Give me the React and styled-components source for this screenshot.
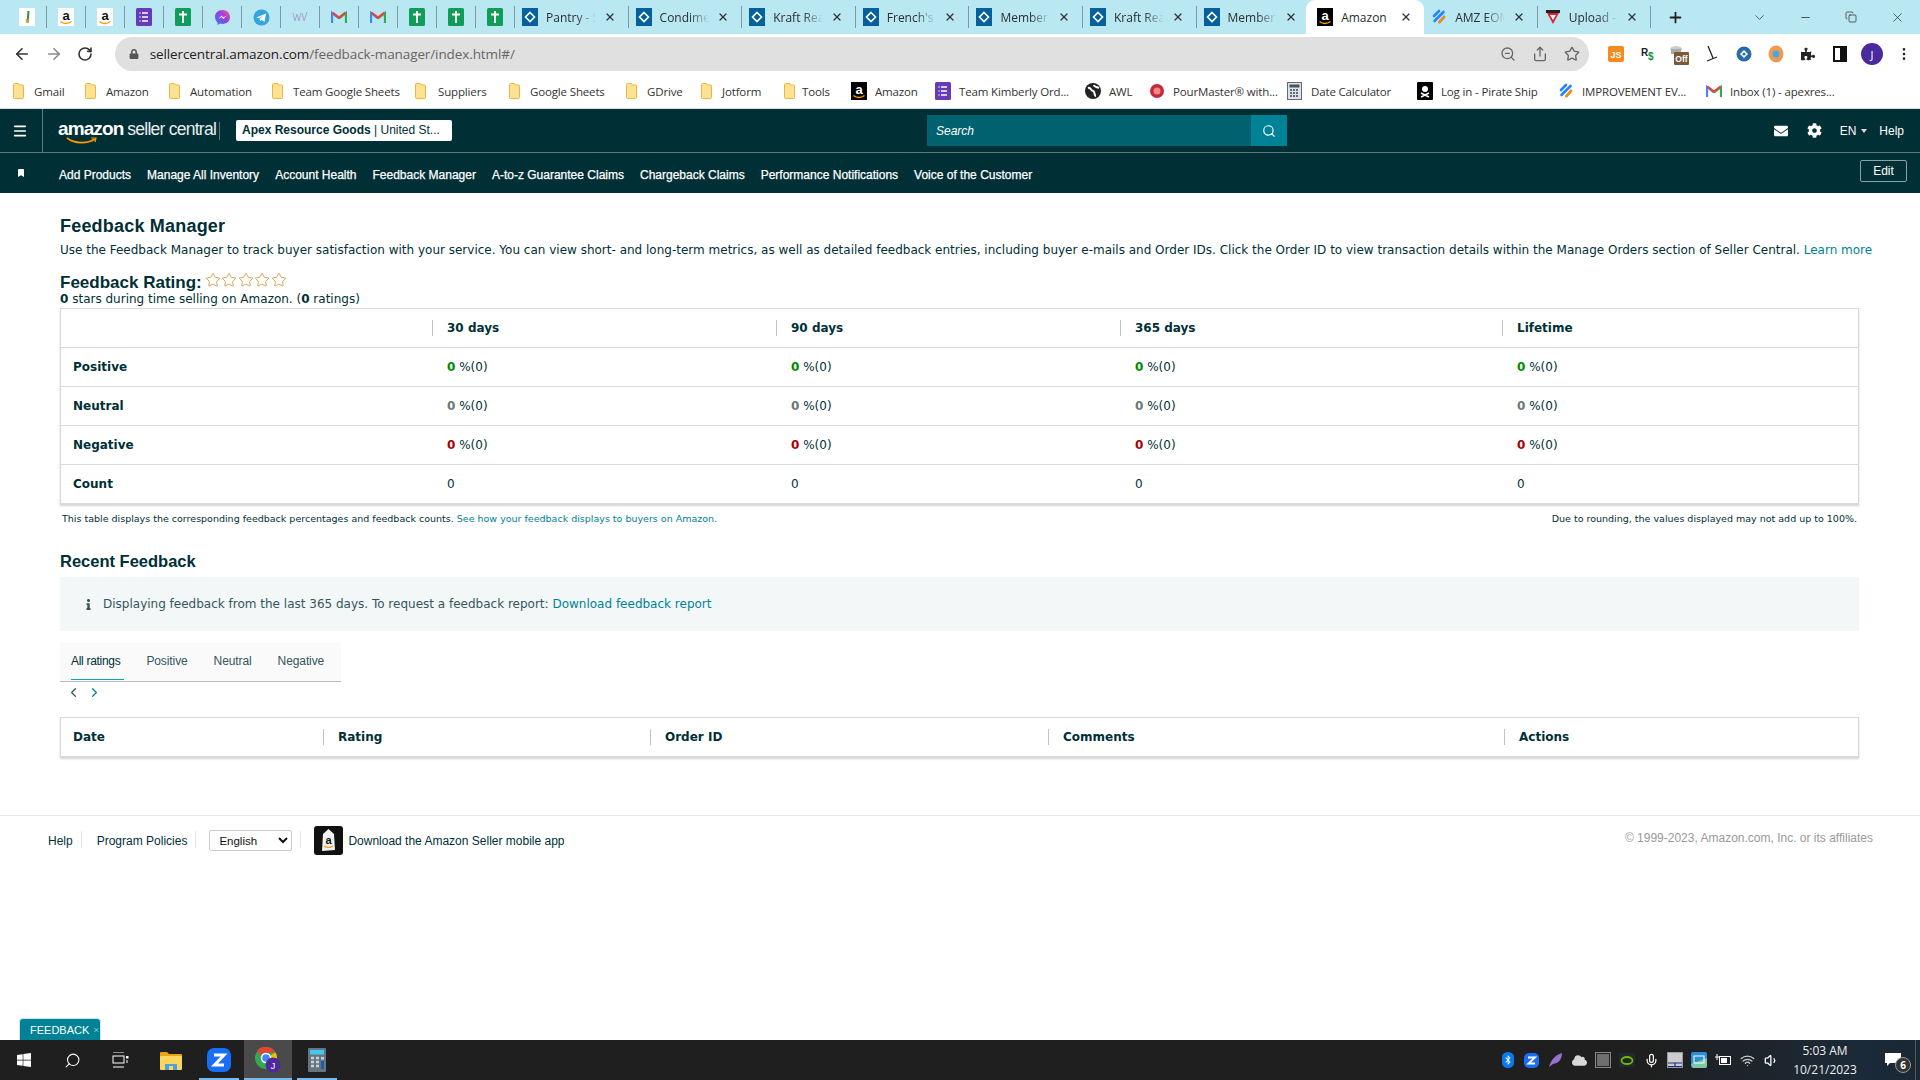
import React from 'react';
import styled, { createGlobalStyle } from 'styled-components';
import {
  ArrowLeft, ArrowRight, RotateCw, ZoomOut, Share, Star, MoreVertical, Menu, Search,
  X, Plus, ChevronDown, ChevronLeft, ChevronRight, Minus, Copy, Mic, Wifi, Volume1,
} from 'lucide-react';
import {
  FaLock, FaPuzzlePiece, FaEnvelope, FaCog, FaBookmark, FaInfo, FaWindows, FaCloud, FaBluetoothB,
} from 'react-icons/fa';

const GlobalStyle = createGlobalStyle`
  html, body { margin: 0; padding: 0; background: #fff; }
  * { box-sizing: border-box; }
`;

const uiFont = '"Open Sans", "Liberation Sans", sans-serif';
const arial = '"Liberation Sans", Arial, sans-serif';
const bodyFont = '"DejaVu Sans", Verdana, sans-serif';

const Page = styled.div`
  width: 1920px;
  height: 1080px;
  display: flex;
  flex-direction: column;
  overflow: hidden;
  position: relative;
  color: #002f36;
`;

/* browser chrome */
const TabStrip = styled.div`
  height: 34px;
  background: #b9e7f2;
  display: flex;
  align-items: stretch;
  padding-left: 8px;
  flex: none;
`;
const PinnedTab = styled.div`
  width: 39px;
  display: flex;
  align-items: center;
  justify-content: center;
  border-right: 1px solid #7d9aa2;
  margin: 0;
  background-clip: content-box;
  border-image: linear-gradient(transparent 7px, #7d9aa2 7px, #7d9aa2 27px, transparent 27px) 1;
`;
const Tab = styled.div`
  width: ${(p) => (p.$active ? '118px' : '113.6px')};
  margin-left: ${(p) => (p.$active ? '-4px' : '0')};
  display: flex;
  align-items: center;
  padding: 0 12px 0 ${(p) => (p.$active ? '11px' : '7px')};
  gap: 8px;
  background: ${(p) => (p.$active ? '#fff' : 'transparent')};
  border-radius: 9px 9px 0 0;
  border-right: ${(p) => (p.$active ? 'none' : '1px solid #7d9aa2')};
  border-image: ${(p) => (p.$active ? 'none' : 'linear-gradient(transparent 7px, #7d9aa2 7px, #7d9aa2 27px, transparent 27px) 1')};
`;
const TabTitle = styled.span`
  flex: 1;
  min-width: 0;
  overflow: hidden;
  white-space: nowrap;
  font: 12px ${uiFont};
  color: #2a2e30;
  mask-image: ${(p) => (p.$active ? 'none' : 'linear-gradient(90deg, #000 60%, transparent 100%)')};
`;
const NewTab = styled.div`
  width: 40px;
  margin-left: 4px;
  display: flex;
  align-items: center;
  justify-content: center;
  color: #222;
`;
const WindowControls = styled.div`
  margin-left: auto;
  display: flex;
  align-items: center;
  color: #333;
`;
const WindowButton = styled.div`
  width: 46px;
  display: flex;
  justify-content: center;
`;
const Toolbar = styled.div`
  height: 40px;
  flex: none;
  display: flex;
  align-items: center;
  background: #fff;
  padding-left: 13px;
`;
const NavIcon = styled.div`
  width: 32px;
  margin-right: ${(p) => p.$gap || 0}px;
  display: flex;
  color: ${(p) => p.$color || '#333'};
`;
const AddressPill = styled.div`
  width: 1479px;
  height: 34px;
  margin-left: 6px;
  border-radius: 17px;
  background: #e0e0e0;
  display: flex;
  align-items: center;
  padding: 0 9px 0 14px;
  color: #555;
`;
const Url = styled.span`
  margin-left: 11px;
  font: 13.5px ${uiFont};
  letter-spacing: -0.1px;
  color: #666;
  & b { font-weight: 400; color: #222; }
`;
const PillIcons = styled.div`
  margin-left: auto;
  display: flex;
  gap: 16px;
  color: #666;
`;
const ExtensionRow = styled.div`
  display: flex;
  align-items: center;
  margin-left: 11px;
  gap: 0;
`;
const ExtensionSlot = styled.div`
  width: 32px;
  display: flex;
  justify-content: center;
  align-items: center;
`;
const Avatar = styled.div`
  width: 22px;
  height: 22px;
  border-radius: 50%;
  background: #4b2a9e;
  color: #fff;
  font: 11px ${uiFont};
  display: flex;
  align-items: center;
  justify-content: center;
`;
const BookmarkBar = styled.div`
  height: 35px;
  flex: none;
  display: flex;
  align-items: center;
  padding-left: 13px;
  background: #fff;
  border-bottom: 1px solid #ddd;
`;
const BookmarkItem = styled.div`
  width: ${(p) => p.$w}px;
  flex: none;
  display: flex;
  align-items: center;
  gap: ${(p) => p.$gap || 9}px;
  font: 11.5px ${uiFont};
  letter-spacing: -0.15px;
  color: #333;
  white-space: nowrap;
`;

/* seller central header */
const TopBar = styled.header`
  height: 44px;
  flex: none;
  background: #002f36;
  border-bottom: 1px solid #5c7a7e;
  display: flex;
  align-items: center;
  color: #fff;
`;
const TopLeft = styled.div`
  width: 927px;
  height: 100%;
  display: flex;
  align-items: center;
`;
const Burger = styled.div`
  width: 43px;
  height: 100%;
  border-right: 1px solid #5c7a7e;
  display: flex;
  align-items: center;
  justify-content: center;
  padding-right: 2px;
`;
const Logo = styled.div`
  width: 161px;
  margin-left: 15px;
  position: relative;
  display: flex;
  align-items: baseline;
  gap: 4px;
  white-space: nowrap;
  font-family: ${arial};
  transform: translateY(-2px);
`;
const LogoAmazon = styled.span`
  font-size: 19px;
  font-weight: 700;
  letter-spacing: -0.9px;
`;
const LogoSeller = styled.span`
  font-size: 17.5px;
  letter-spacing: -0.75px;
  color: #e8eeee;
`;
const LogoSmile = styled.svg`
  position: absolute;
  left: 8px;
  top: 19px;
`;
const VRule = styled.div`
  width: 1px;
  height: 18px;
  background: #5c7a7e;
`;
const AccountSwitcher = styled.div`
  width: 216px;
  height: 21px;
  margin-left: 16px;
  background: #fff;
  border-radius: 2px;
  color: #002f36;
  padding: 0 6px;
  font: 12px/21px ${arial};
  white-space: nowrap;
  overflow: hidden;
  & b { font-weight: 700; }
`;
const SearchBox = styled.div`
  width: 360px;
  height: 31px;
  background: #00626f;
  display: flex;
  align-items: center;
`;
const SearchLabel = styled.span`
  flex: 1;
  padding-left: 9px;
  font: italic 12px ${arial};
  color: #fff;
`;
const SearchButton = styled.div`
  width: 36px;
  height: 100%;
  background: #008296;
  display: flex;
  align-items: center;
  justify-content: center;
`;
const TopRight = styled.div`
  margin-left: auto;
  display: flex;
  align-items: center;
  padding-right: 16px;
  font: 12px ${arial};
`;
const Caret = styled.span`
  width: 0;
  height: 0;
  margin: 0 12px 0 5px;
  border: 3.5px solid transparent;
  border-top: 4px solid #ddd;
  border-bottom: none;
`;
const NavBar = styled.nav`
  height: 40px;
  flex: none;
  background: #002f36;
  display: flex;
  align-items: center;
  color: #fff;
  padding-left: 17px;
`;
const NavLinks = styled.div`
  display: flex;
  gap: 16px;
  margin-left: 34px;
  margin-top: 4px;
  font: 12px ${arial};
  -webkit-text-stroke: 0.25px #fff;
`;
const EditButton = styled.div`
  margin: -4px 13px 0 auto;
  width: 47px;
  height: 22px;
  border: 1px solid #8aa0a3;
  border-radius: 2px;
  text-align: center;
  font: 12px/20px ${arial};
`;

/* page body */
const Main = styled.main`
  flex: 1;
  padding: 0 61px 0 60px;
  min-height: 0;
  display: flex;
  flex-direction: column;
`;
const PageTitle = styled.h1`
  margin: 21px 0 0;
  font: 700 18px/24px ${arial};
  letter-spacing: 0.2px;
`;
const Intro = styled.p`
  margin: 2px 0 0;
  font: 12px/20px ${bodyFont};
  white-space: nowrap;
  color: #002f36;
`;
const Link = styled.span`
  color: #008296;
`;
const RatingRow = styled.div`
  margin-top: 13px;
  height: 20px;
  display: flex;
  align-items: center;
  gap: 3px;
  font: 700 17px/20px ${arial};
`;
const Stars = styled.span`
  display: flex;
  margin-top: -6px;
  gap: 0.5px;
  color: #c8912b;
`;
const RatingNote = styled.div`
  height: 14px;
  font: 12px/13px ${bodyFont};
  & b { font-weight: 700; }
`;
const DataTable = styled.div`
  margin-top: ${(p) => p.$top}px;
  border: 1px solid #d5dbdb;
  border-bottom-width: 2px;
  box-shadow: 0 1px 2px rgba(0, 0, 0, 0.18);
  flex: none;
`;
const TableRow = styled.div`
  display: grid;
  grid-template-columns: ${(p) => p.$cols};
  height: ${(p) => p.$h || 39}px;
  align-items: center;
  border-top: ${(p) => (p.$head ? 'none' : '1px solid #d5dbdb')};
  font: 12px ${bodyFont};
`;
const HeadCell = styled.div`
  font: 700 12px/16px ${bodyFont};
  padding-left: ${(p) => (p.$first ? '12px' : '14px')};
  border-left: ${(p) => (p.$first ? 'none' : '1px solid #bcc5c6')};
  min-height: 14px;
`;
const LabelCell = styled.div`
  font-weight: 700;
  padding-left: 12px;
`;
const ValueCell = styled.div`
  padding-left: 15px;
  & b { font-weight: 700; color: ${(p) => p.$tone}; }
`;
const TableNotes = styled.div`
  margin-top: 7px;
  padding: 0 2px;
  display: flex;
  justify-content: space-between;
  font: 9.5px/14px ${bodyFont};
`;
const SectionTitle = styled.h2`
  margin: 23px 0 0;
  font: 700 16.5px/24px ${arial};
`;
const InfoPanel = styled.div`
  margin-top: 4px;
  height: 54px;
  background: #f3f7f7;
  display: flex;
  align-items: center;
  padding-left: 23px;
  gap: 9px;
  font: 12px ${bodyFont};
  color: #33565c;
`;
const FilterTabs = styled.div`
  margin-top: 12px;
  width: 281px;
  height: 39px;
  background: #fafafa;
  border-bottom: 1px solid #bbb;
  display: flex;
  padding-left: 11px;
  gap: 26px;
`;
const FilterTab = styled.div`
  height: 37px;
  padding-right: ${(p) => (p.$active ? '4px' : '0')};
  margin-right: ${(p) => (p.$active ? '-4px' : '0')};
  font: 12px/36px ${arial};
  letter-spacing: ${(p) => (p.$active ? '-0.3px' : '-0.1px')};
  color: ${(p) => (p.$active ? '#002f36' : '#33565c')};
  border-bottom: ${(p) => (p.$active ? '1px solid #00a8b5' : 'none')};
`;
const Pager = styled.div`
  height: 21px;
  display: flex;
  align-items: center;
  padding-left: 6px;
  gap: 6px;
  color: #33565c;
`;
const Footer = styled.footer`
  margin-top: auto;
  height: 225px;
  flex: none;
  border-top: 1px solid #e7e7e7;
  padding: 10px 47px 0 48px;
  display: flex;
  align-items: flex-start;
  font: 12px ${arial};
  color: #002f36;
`;
const FooterItem = styled.div`
  height: 29px;
  display: flex;
  align-items: center;
  gap: 5px;
  padding: 0 ${(p) => p.$pr || 9}px 0 ${(p) => p.$pl || 0}px;
  border-right: ${(p) => (p.$plain ? 'none' : '1px solid transparent')};
  position: relative;
  &::after {
    content: '';
    display: ${(p) => (p.$plain ? 'none' : 'block')};
    position: absolute;
    right: 0;
    top: 5px;
    height: 17px;
    width: 1px;
    background: #e3e6e6;
  }
`;
const LangSelect = styled.select`
  width: 83px;
  height: 21px;
  font: 11.5px ${arial};
  background: #fff;
  border: 1px solid #ccc;
  border-radius: 2px;
  padding-left: 5px;
  color: #111;
`;
const Copyright = styled.div`
  margin-left: auto;
  color: #999;
  line-height: 24px;
`;
const FeedbackTag = styled.div`
  position: absolute;
  left: 19px;
  bottom: 40px;
  width: 82px;
  height: 22px;
  background: #008296;
  border: 1px solid #cfe3e6;
  border-bottom: none;
  border-radius: 4px 4px 0 0;
  color: #fff;
  font: 11px/22px ${arial};
  display: flex;
  align-items: center;
  padding-left: 10px;
  gap: 4px;
`;

/* windows taskbar */
const Taskbar = styled.div`
  height: 40px;
  flex: none;
  background: linear-gradient(90deg, #1f1f1f 0, #1f1f1f 1650px, #1b2a38 1860px, #1a2735 100%);
  display: flex;
  align-items: stretch;
  color: #fff;
`;
const TaskSlot = styled.div`
  width: ${(p) => p.$w || 48}px;
  display: flex;
  align-items: center;
  justify-content: center;
  background: ${(p) => (p.$active ? '#4a4a4a' : 'transparent')};
  box-shadow: ${(p) => (p.$running ? 'inset 0 -2px 0 #76b9ed' : 'none')};
  margin-right: ${(p) => p.$mr || 0}px;
`;
const Tray = styled.div`
  margin-left: auto;
  display: flex;
  align-items: center;
`;
const TraySlot = styled.div`
  width: 24px;
  display: flex;
  justify-content: center;
  align-items: center;
`;
const Clock = styled.div`
  width: 76px;
  margin-left: 4px;
  text-align: center;
  font: 12px/19px ${uiFont};
  color: #eee;
`;
const Notify = styled.div`
  width: 45px;
  height: 100%;
  position: relative;
  display: flex;
  align-items: center;
  justify-content: center;
  border-right: 1px solid #555;
  margin-left: 8px;
  margin-right: 4px;
`;
const NotifyBadge = styled.span`
  position: absolute;
  left: 24px;
  top: 17px;
  width: 16px;
  height: 16px;
  border-radius: 50%;
  background: #333;
  border: 1px solid #999;
  font: 700 10px/14px ${uiFont};
  text-align: center;
`;

const Sheet = () => (
  <svg width="16" height="18" viewBox="0 0 16 18"><rect width="16" height="18" rx="1.5" fill="#0f9d58" /><path d="M8 3v12M4 6.5h8" stroke="#fff" strokeWidth="2" /></svg>
);
const Gmail = () => (
  <svg width="16" height="14" viewBox="0 0 16 14"><path d="M1 13V3l7 5.5" fill="none" stroke="#4285f4" strokeWidth="2.2" /><path d="M15 13V3L8 8.5" fill="none" stroke="#34a853" strokeWidth="2.2" /><path d="M1.5 2.5 8 7.5l6.5-5" fill="none" stroke="#ea4335" strokeWidth="2.2" /></svg>
);
const AmazonFav = ({ dark }) => (
  <svg width="16" height="18" viewBox="0 0 16 18">
    <rect width="16" height="18" fill={dark ? '#000' : '#fff'} />
    <text x="8" y="12" textAnchor="middle" fontFamily={arial} fontWeight="700" fontSize="13" fill={dark ? '#fff' : '#111'}>a</text>
    <path d="M2.5 13.5c3 2.5 7.5 2.5 11 0" stroke="#f90" strokeWidth="1.5" fill="none" />
  </svg>
);
const Forms = () => (
  <svg width="16" height="18" viewBox="0 0 16 18"><rect width="16" height="18" rx="1.5" fill="#673ab7" /><path d="M6 5h6M6 9h6M6 13h6M3.5 5h1M3.5 9h1M3.5 13h1" stroke="#fff" strokeWidth="1.5" /></svg>
);
const Diamond = () => (
  <svg width="16" height="18" viewBox="0 0 16 18"><rect width="16" height="18" fill="#05619e" /><path d="M8 4.5 12.5 9 8 13.5 3.5 9Z" fill="none" stroke="#fff" strokeWidth="1.6" /></svg>
);
const Messenger = () => (
  <svg width="17" height="17" viewBox="0 0 17 17"><defs><linearGradient id="ms" x1="0" y1="1" x2="1" y2="0"><stop offset="0" stopColor="#2a7bf0" /><stop offset=".6" stopColor="#a33be0" /><stop offset="1" stopColor="#ff6a6a" /></linearGradient></defs><path d="M8.5 1C4 1 1 4 1 8c0 2.3 1 4 2.5 5.200V16l2.500-1.400c.8.2 1.600.3 2.500.3 4.500 0 7.500-3 7.500-6.900S13 1 8.500 1Z" fill="url(#ms)" /><path d="m4.500 10 3-3.500 2 2 3-2-3 3.500-2-2Z" fill="#fff" /></svg>
);
const Telegram = () => (
  <svg width="17" height="17" viewBox="0 0 17 17"><circle cx="8.500" cy="8.500" r="8" fill="#34a4de" /><path d="M3.500 8.500 13 4.500l-1.500 8.500-3-2.200-1.500 1.500-.3-2.500 4-3.300-5 2.800Z" fill="#fff" /></svg>
);
const Sprout = () => (
  <svg width="16" height="18" viewBox="0 0 16 18"><rect width="16" height="18" fill="#fff" /><path d="M8.500 15 9.500 3" stroke="#3d8b37" strokeWidth="2" /><path d="M8 15l-.3-4" stroke="#f0a030" strokeWidth="2" /></svg>
);
const Faded = () => (
  <svg width="16" height="12" viewBox="0 0 16 12"><path d="M1 2l2 8 2-7 2 7 2-8M10 2l2 8 3-9" fill="none" stroke="#a9a6c8" strokeWidth="1" /></svg>
);
const Jira = ({ size = 16 }) => (
  <svg width={size} height={size} viewBox="0 0 16 16"><path d="M8 2 3 7M12.500 3 3.500 12M13 8 8.500 13" stroke="#2684ff" strokeWidth="2.600" strokeLinecap="round" /><path d="M13 8 8.500 13" stroke="#ff8b00" strokeWidth="2.600" strokeLinecap="round" /></svg>
);
const UploadFav = () => (
  <svg width="16" height="16" viewBox="0 0 16 16"><path d="M1 2h14L8 15Z" fill="#e0202e" /><rect x="1" y="1" width="14" height="3" fill="#222" /><path d="M5 6h6L8 11Z" fill="#fff" /></svg>
);
const Folder = () => (
  <svg width="12" height="18" viewBox="0 0 12 18"><path d="M.5 2.500a1 1 0 0 1 1-1h4l1 1.500h3a1 1 0 0 1 1 1v11.500a1 1 0 0 1-1 1h-8a1 1 0 0 1-1-1Z" fill="#fde293" stroke="#e8b83f" /></svg>
);

const tabIcon = { diamond: <Diamond />, amazon: <AmazonFav dark />, jira: <Jira />, upload: <UploadFav /> };

const pinned = [<Sprout />, <AmazonFav />, <AmazonFav />, <Forms />, <Sheet />, <Messenger />, <Telegram />, <Faded />, <Gmail />, <Gmail />, <Sheet />, <Sheet />, <Sheet />];
const tabs = [
  ['diamond', 'Pantry - Shelf'], ['diamond', 'Condiment List'], ['diamond', 'Kraft Real May'], ['diamond', "French's Mustard"],
  ['diamond', 'Member Portal'], ['diamond', 'Kraft Real May'], ['diamond', 'Member Portal'], ['amazon', 'Amazon', true],
  ['jira', 'AMZ EOM Board'], ['upload', 'Upload - Files'],
];
const bookmarks = [
  [72, 'Gmail'], [84, 'Amazon'], [103, 'Automation'], [143, 'Team Google Sheets'], [94, 'Suppliers', 11], [117, 'Google Sheets'],
  [75, 'GDrive'], [83, 'Jotform'], [67, 'Tools', 6],
];
const moreBookmarks = [
  [84, <AmazonFav dark />, 'Amazon'], [150, <Forms />, 'Team Kimberly Ord...'],
  [64, <svg width="16" height="16" viewBox="0 0 16 16"><circle cx="8" cy="8" r="8" fill="#222" /><path d="M3 5c3-1 3 3 5 3s1 5 3 5M9 2c0 2 3 2 5 3" stroke="#fff" strokeWidth="2" fill="none" /></svg>, 'AWL'],
  [138, <svg width="16" height="16" viewBox="0 0 16 16"><circle cx="8" cy="8" r="7" fill="#c8283c" /><circle cx="8" cy="8" r="3.500" fill="#e88" /></svg>, 'PourMaster® with...'],
  [130, <svg width="15" height="18" viewBox="0 0 15 18"><rect x=".5" y=".5" width="14" height="17" fill="#dde2e6" stroke="#667" /><rect x="2.500" y="2.500" width="10" height="3" fill="#456" /><path d="M3 8h9M3 11h9M3 14h9" stroke="#345" strokeWidth="1.600" strokeDasharray="2 1" /></svg>, 'Date Calculator', 9],
  [141, <svg width="16" height="18" viewBox="0 0 16 18"><rect width="16" height="18" rx="1" fill="#000" /><circle cx="8" cy="7" r="3" fill="#fff" /><path d="m4 11 8 4m0-4-8 4" stroke="#fff" strokeWidth="1.500" /></svg>, 'Log in - Pirate Ship'],
  [148, <Jira />, 'IMPROVEMENT EV...'], [140, <Gmail />, 'Inbox (1) - apexres...'],
];

const feedbackCols = '371px 344px 344px 382px 1fr';
const recentCols = '262px 327px 398px 456px 1fr';
const periods = ['30 days', '90 days', '365 days', 'Lifetime'];
const rows = [
  ['Positive', '#008a00'],
  ['Neutral', '#6c7778'],
  ['Negative', '#a80000'],
];

const App = () => (
  <Page>
    <GlobalStyle />
    <TabStrip>
      {pinned.map((icon, i) => <PinnedTab key={i}>{icon}</PinnedTab>)}
      {tabs.map(([icon, title, active]) => (
        <Tab key={title + icon} $active={active}>
          {tabIcon[icon]}
          <TabTitle $active={active}>{title}</TabTitle>
          <X size={12} strokeWidth={2.5} color="#333" />
        </Tab>
      ))}
      <NewTab><Plus size={17} strokeWidth={2.5} /></NewTab>
      <WindowControls>
        <WindowButton><ChevronDown size={15} strokeWidth={1.2} /></WindowButton>
        <WindowButton><Minus size={13} strokeWidth={1.5} /></WindowButton>
        <WindowButton><Copy size={12} strokeWidth={1.5} /></WindowButton>
        <WindowButton><X size={15} strokeWidth={1.2} /></WindowButton>
      </WindowControls>
    </TabStrip>

    <Toolbar>
      <NavIcon><ArrowLeft size={18} strokeWidth={2.2} /></NavIcon>
      <NavIcon $color="#8a8a8a"><ArrowRight size={18} strokeWidth={2.2} /></NavIcon>
      <NavIcon><RotateCw size={16} strokeWidth={2.4} /></NavIcon>
      <AddressPill>
        <FaLock size={10} color="#555" />
        <Url><b>sellercentral.amazon.com</b>/feedback-manager/index.html#/</Url>
        <PillIcons>
          <ZoomOut size={16} />
          <Share size={16} />
          <Star size={16} />
        </PillIcons>
      </AddressPill>
      <ExtensionRow>
        <ExtensionSlot>
          <svg width="16" height="16" viewBox="0 0 16 16"><rect width="16" height="16" rx="2" fill="#f58a1f" /><text x="8" y="12" textAnchor="middle" fontFamily={arial} fontWeight="700" fontSize="9" fill="#fff">JS</text></svg>
        </ExtensionSlot>
        <ExtensionSlot>
          <svg width="16" height="16" viewBox="0 0 16 16"><text x="1" y="10" fontFamily={arial} fontWeight="700" fontSize="10" fill="#222">R</text><text x="8" y="14" fontFamily={arial} fontWeight="700" fontSize="10" fill="#1a8f3a">$</text></svg>
        </ExtensionSlot>
        <ExtensionSlot>
          <svg width="22" height="24" viewBox="0 0 22 24"><ellipse cx="7" cy="7" rx="6" ry="3" fill="#ccc" /><rect x="2" y="7" width="10" height="5" fill="#aaa" /><rect x="5" y="10" width="15" height="13" rx="1" fill="#7b5a3a" /><text x="12.500" y="20" textAnchor="middle" fontFamily={arial} fontWeight="700" fontSize="8.500" fill="#fff">Off</text></svg>
        </ExtensionSlot>
        <ExtensionSlot>
          <svg width="14" height="18" viewBox="0 0 14 18"><path d="M3 1l5 12M2 16l10-4" stroke="#222" strokeWidth="1.300" fill="none" /></svg>
        </ExtensionSlot>
        <ExtensionSlot>
          <svg width="16" height="16" viewBox="0 0 16 16"><circle cx="8" cy="8" r="7.500" fill="#2a6ca8" /><path d="M8 4 12 8 8 12 4 8Z" fill="#fff" /><circle cx="8" cy="8" r="1.500" fill="#2a6ca8" /></svg>
        </ExtensionSlot>
        <ExtensionSlot>
          <svg width="16" height="18" viewBox="0 0 16 18"><ellipse cx="8" cy="9" rx="7.500" ry="8.500" fill="#ee9a52" /><circle cx="8" cy="9" r="3.500" fill="#45a8e0" /></svg>
        </ExtensionSlot>
        <ExtensionSlot><FaPuzzlePiece size={14} color="#222" /></ExtensionSlot>
        <ExtensionSlot>
          <svg width="14" height="16" viewBox="0 0 14 16"><rect x="1" y="1" width="12" height="14" fill="#fff" stroke="#111" strokeWidth="2" /><rect x="7" y="1" width="6" height="14" fill="#111" /></svg>
        </ExtensionSlot>
        <ExtensionSlot><Avatar>J</Avatar></ExtensionSlot>
        <ExtensionSlot><MoreVertical size={16} color="#222" /></ExtensionSlot>
      </ExtensionRow>
    </Toolbar>

    <BookmarkBar>
      {bookmarks.map(([w, label, gap]) => (
        <BookmarkItem key={label} $w={w} $gap={gap}><Folder />{label}</BookmarkItem>
      ))}
      {moreBookmarks.map(([w, icon, label, gap]) => (
        <BookmarkItem key={label + w} $w={w} $gap={gap || 8}>{icon}{label}</BookmarkItem>
      ))}
    </BookmarkBar>

    <TopBar>
      <TopLeft>
        <Burger><Menu size={16} color="#fff" strokeWidth={2.4} /></Burger>
        <Logo>
          <LogoAmazon>amazon</LogoAmazon>
          <LogoSeller>seller central</LogoSeller>
          <LogoSmile width="32" height="9" viewBox="0 0 32 9">
            <path d="M1 1c8 6 20 6 28 1" stroke="#f90" strokeWidth="1.700" fill="none" />
            <path d="m25 1 5 0-1 4" stroke="#f90" strokeWidth="1.200" fill="none" />
          </LogoSmile>
        </Logo>
        <VRule />
        <AccountSwitcher><b>Apex Resource Goods</b> | United St...</AccountSwitcher>
      </TopLeft>
      <SearchBox>
        <SearchLabel>Search</SearchLabel>
        <SearchButton><Search size={14} color="#fff" strokeWidth={2} /></SearchButton>
      </SearchBox>
      <TopRight>
        <FaEnvelope size={14} style={{ marginRight: 19 }} />
        <FaCog size={15} style={{ marginRight: 18 }} />
        EN<Caret />Help
      </TopRight>
    </TopBar>
    <NavBar>
      <FaBookmark size={8} />
      <NavLinks>
        <span>Add Products</span>
        <span>Manage All Inventory</span>
        <span>Account Health</span>
        <span>Feedback Manager</span>
        <span>A-to-z Guarantee Claims</span>
        <span>Chargeback Claims</span>
        <span>Performance Notifications</span>
        <span>Voice of the Customer</span>
      </NavLinks>
      <EditButton>Edit</EditButton>
    </NavBar>

    <Main>
      <PageTitle>Feedback Manager</PageTitle>
      <Intro>
        Use the Feedback Manager to track buyer satisfaction with your service. You can view short- and long-term metrics, as well as detailed feedback entries, including buyer e-mails and Order IDs. Click the Order ID to view transaction details within the Manage Orders section of Seller Central. <Link>Learn more</Link>
      </Intro>
      <RatingRow>
        Feedback Rating:
        <Stars>{[0, 1, 2, 3, 4].map((s) => <Star key={s} size={16} strokeWidth={1.2} />)}</Stars>
      </RatingRow>
      <RatingNote><b>0</b> stars during time selling on Amazon. (<b>0</b> ratings)</RatingNote>

      <DataTable $top={1}>
        <TableRow $head $cols={feedbackCols} $h={38}>
          <div />
          {periods.map((p) => <HeadCell key={p}>{p}</HeadCell>)}
        </TableRow>
        {rows.map(([label, tone]) => (
          <TableRow key={label} $cols={feedbackCols}>
            <LabelCell>{label}</LabelCell>
            {periods.map((p) => <ValueCell key={p} $tone={tone}><b>0</b> %(0)</ValueCell>)}
          </TableRow>
        ))}
        <TableRow $cols={feedbackCols}>
          <LabelCell>Count</LabelCell>
          {periods.map((p) => <ValueCell key={p}>0</ValueCell>)}
        </TableRow>
      </DataTable>
      <TableNotes>
        <span>This table displays the corresponding feedback percentages and feedback counts. <Link>See how your feedback displays to buyers on Amazon.</Link></span>
        <span>Due to rounding, the values displayed may not add up to 100%.</span>
      </TableNotes>

      <SectionTitle>Recent Feedback</SectionTitle>
      <InfoPanel>
        <FaInfo size={11} color="#33565c" />
        <span>Displaying feedback from the last 365 days. To request a feedback report: <Link>Download feedback report</Link></span>
      </InfoPanel>
      <FilterTabs>
        <FilterTab $active>All ratings</FilterTab>
        <FilterTab>Positive</FilterTab>
        <FilterTab>Neutral</FilterTab>
        <FilterTab>Negative</FilterTab>
      </FilterTabs>
      <Pager>
        <ChevronLeft size={15} />
        <ChevronRight size={15} color="#008296" />
      </Pager>
      <DataTable $top={14}>
        <TableRow $head $cols={recentCols} $h={38}>
          <HeadCell $first>Date</HeadCell>
          <HeadCell>Rating</HeadCell>
          <HeadCell>Order ID</HeadCell>
          <HeadCell>Comments</HeadCell>
          <HeadCell>Actions</HeadCell>
        </TableRow>
      </DataTable>
    </Main>
    <Footer>
      <FooterItem>Help</FooterItem>
      <FooterItem $pl={14}>Program Policies</FooterItem>
      <FooterItem $pl={12}>
        <LangSelect defaultValue="English"><option>English</option></LangSelect>
      </FooterItem>
      <FooterItem $plain $pl={12}>
        <svg width="29" height="29" viewBox="0 0 29 29">
          <rect width="29" height="29" rx="3" fill="#111" />
          <path d="M14.500 3 20 8l1 16-13 1 1-17Z" fill="#f2f2f2" />
          <text x="14.500" y="18" textAnchor="middle" fontFamily={arial} fontWeight="700" fontSize="11" fill="#111">a</text>
          <path d="M10 20c3 2 6 2 9 0" stroke="#f90" strokeWidth="1.200" fill="none" />
        </svg>
        Download the Amazon Seller mobile app
      </FooterItem>
      <Copyright>© 1999-2023, Amazon.com, Inc. or its affiliates</Copyright>
    </Footer>
    <FeedbackTag>FEEDBACK <X size={10} /></FeedbackTag>

    <Taskbar>
      <TaskSlot><FaWindows size={16} /></TaskSlot>
      <TaskSlot><Search size={17} style={{ transform: 'scaleX(-1)' }} strokeWidth={1.5} /></TaskSlot>
      <TaskSlot $mr={3}>
        <svg width="17" height="16" viewBox="0 0 17 16"><path d="M1 0h11M1 15h11" stroke="#fff" /><rect x="1" y="4" width="11" height="7" fill="none" stroke="#fff" /><rect x="14" y="4" width="2.500" height="2.500" fill="#fff" /><path d="M15 8v3" stroke="#fff" /></svg>
      </TaskSlot>
      <TaskSlot>
        <svg width="22" height="19" viewBox="0 0 22 19"><path d="M0 2a1 1 0 0 1 1-1h6l2 2h12a1 1 0 0 1 1 1v3H0Z" fill="#e8a317" /><rect y="5" width="22" height="14" rx="1" fill="#fcd55f" /><rect x="5" y="13" width="12" height="6" fill="#4aa3df" /><rect x="9" y="15" width="4" height="4" fill="#fcd55f" /></svg>
      </TaskSlot>
      <TaskSlot $running $w={40} $mr={5} style={{ marginLeft: 4 }}>
        <svg width="24" height="24" viewBox="0 0 24 24"><rect width="24" height="24" rx="7" fill="#1a6ef5" /><path d="M7 7h10L7.500 17H17" fill="none" stroke="#fff" strokeWidth="3" /></svg>
      </TaskSlot>
      <TaskSlot $active $running>
        <svg width="26" height="26" viewBox="0 0 26 26">
          <circle cx="11" cy="11" r="11" fill="#34a853" />
          <path d="M11 0a11 11 0 0 1 9.500 5.500H11a5.500 5.500 0 0 0-5 3L2 3.500A11 11 0 0 1 11 0Z" fill="#ea4335" />
          <path d="M20.500 5.500A11 11 0 0 1 11 22l5-8.500V8Z" fill="#fbbc05" />
          <circle cx="11" cy="11" r="4.500" fill="#4285f4" stroke="#fff" strokeWidth="1.500" />
          <circle cx="18" cy="18" r="7.500" fill="#4b2a9e" />
          <text x="18" y="21.500" textAnchor="middle" fontFamily={arial} fontSize="9" fill="#fff">J</text>
        </svg>
      </TaskSlot>
      <TaskSlot $running $w={40} $mr={0} style={{ marginLeft: 5 }}>
        <svg width="18" height="24" viewBox="0 0 18 24"><rect width="18" height="24" rx="1" fill="#667680" /><rect x="2" y="2" width="14" height="4.500" fill="#45c8ee" /><path d="M3 10h3M8 10h3M3 14h3M8 14h3M3 18h3M8 18h3" stroke="#c8d2d8" strokeWidth="2.500" /><rect x="13" y="13" width="3" height="8" fill="#1c5fa8" /><rect x="13" y="9" width="3" height="2.500" fill="#c8d2d8" /></svg>
      </TaskSlot>
      <Tray>
        <TraySlot><svg width="12" height="16" viewBox="0 0 12 16"><rect width="12" height="16" rx="5.500" fill="#0a78f0" /></svg><FaBluetoothB size={10} style={{ marginLeft: -11 }} /></TraySlot>
        <TraySlot><svg width="15" height="15" viewBox="0 0 15 15"><rect width="15" height="15" rx="5" fill="#1a6ef5" /><path d="M4 4.500h7L4.500 10.500H11" fill="none" stroke="#fff" strokeWidth="1.800" /></svg></TraySlot>
        <TraySlot><svg width="15" height="16" viewBox="0 0 15 16"><path d="M1 15C3 8 7 3 14 1c0 6-3 10-9 11" fill="#9b6fd0" /></svg></TraySlot>
        <TraySlot><FaCloud size={15} color="#d8d8d8" /></TraySlot>
        <TraySlot><svg width="16" height="16" viewBox="0 0 16 16"><rect x=".5" y=".5" width="15" height="15" fill="#222" stroke="#888" /><path d="M2 3h12M2 5h12M2 7h12M2 9h12M2 11h12M2 13h12" stroke="#bbb" /></svg></TraySlot>
        <TraySlot><svg width="16" height="14" viewBox="0 0 16 14"><rect width="16" height="14" fill="#1f2a30" /><ellipse cx="8" cy="7.500" rx="5.500" ry="3.500" fill="none" stroke="#76b900" strokeWidth="1.800" /></svg></TraySlot>
        <TraySlot><Mic size={15} /></TraySlot>
        <TraySlot><svg width="16" height="16" viewBox="0 0 16 16"><rect x=".5" y=".5" width="15" height="15" fill="#ccc" stroke="#999" /><path d="M1 11h14M8 11v4" stroke="#1c2a8a" strokeWidth="1.200" /><rect x="1" y="14" width="14" height="1" fill="#1c2a8a" /></svg></TraySlot>
        <TraySlot><svg width="16" height="16" viewBox="0 0 16 16"><rect width="16" height="16" rx="2" fill="#2d8fd8" /><path d="M0 12 16 6v8a2 2 0 0 1-2 2H2Z" fill="#7cc8a0" /><rect x="3" y="4" width="10" height="7" fill="none" stroke="#fff" /></svg></TraySlot>
        <TraySlot><svg width="16" height="12" viewBox="0 0 16 12"><rect x="4.500" y="2.500" width="11" height="8" fill="none" stroke="#fff" /><rect x="6" y="4" width="6" height="5" fill="#fff" /><path d="M0 3h4M2 0v6" stroke="#fff" /></svg></TraySlot>
        <TraySlot><Wifi size={15} color="#ccc" /></TraySlot>
        <TraySlot><Volume1 size={15} /></TraySlot>
        <Clock>5:03 AM<br />10/21/2023</Clock>
        <Notify>
          <svg width="16" height="14" viewBox="0 0 16 14"><path d="M0 0h16v10H5l-3 3v-3H0Z" fill="#fff" /></svg>
          <NotifyBadge>6</NotifyBadge>
        </Notify>
      </Tray>
    </Taskbar>
  </Page>
);

export default App;
